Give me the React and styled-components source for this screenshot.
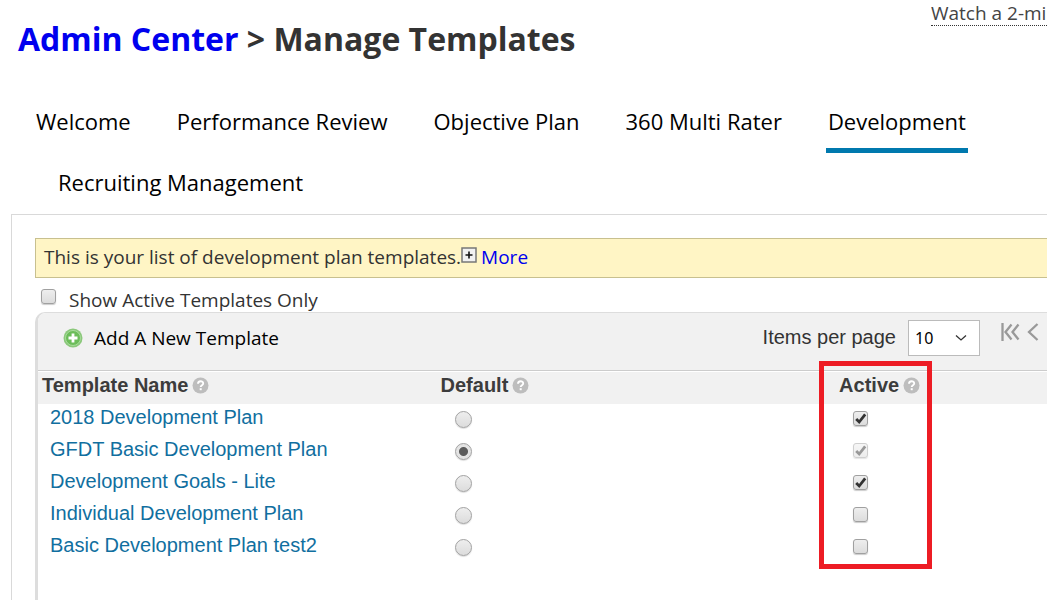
import React, { useState } from "react";
import styled, { createGlobalStyle } from "styled-components";

const GlobalStyle = createGlobalStyle`
  * {
    box-sizing: border-box;
  }
  body {
    margin: 0;
    background-color: white;
    color: #333;
    font-family: "Open Sans", "Noto Sans", sans-serif;
    font-size: 19px;
  }
`;

const Page = styled.div`
  min-height: 100vh;
  display: flex;
  flex-direction: column;
  overflow: hidden;
`;

const Header = styled.header`
  display: flex;
  justify-content: space-between;
  align-items: flex-start;
  padding-left: 18px;
  height: 90px;
`;

const Title = styled.h1`
  margin: 17px 0 0;
  font-size: 32px;
  line-height: 44px;
  white-space: nowrap;
`;

const TitleLink = styled.a`
  color: #0000ee;
  text-decoration: none;
`;

const VideoLink = styled.a`
  flex: 0 0 116px;
  margin-top: 2px;
  overflow: hidden;
  white-space: nowrap;
  color: #444;
  line-height: 23px;
  text-decoration: none;
  border-bottom: 1px dotted #333;
`;

const Tabs = styled.nav`
  padding: 15px 0 0 34px;
`;

const TabRow = styled.div`
  display: flex;
  gap: 42px;
  height: 48px;
  margin-bottom: 13px;
  padding-left: ${(props) => (props.$indent ? "22px" : "0")};
`;

const Tab = styled.button`
  padding: 0 2px 12px;
  border: none;
  border-bottom: 5px solid ${(props) => (props.$active ? "#0079ae" : "transparent")};
  background: none;
  color: black;
  font-family: inherit;
  font-size: 22px;
  line-height: 30px;
  white-space: nowrap;
  cursor: pointer;
`;

const Panel = styled.main`
  flex: 1;
  display: flex;
  flex-direction: column;
  margin: -13px 0 0 11px;
  padding: 23px 0 0 23px;
  border-top: 1px solid #d9d9d9;
  border-left: 1px solid #d9d9d9;
`;

const Notice = styled.div`
  display: flex;
  align-items: center;
  height: 40px;
  padding: 0 0 2px 8px;
  border: 1px solid #c8c08f;
  border-right: none;
  background-color: #fff5c5;
`;

const MoreButton = styled.button`
  display: flex;
  align-items: center;
  gap: 4px;
  padding: 0;
  border: none;
  background: none;
  color: #0000ee;
  font: inherit;
  cursor: pointer;

  svg {
    margin-bottom: 5px;
  }
`;

const FilterLabel = styled.label`
  display: flex;
  align-items: center;
  gap: 13px;
  height: 34px;
  padding: 10px 0 0 6px;
  line-height: 24px;
`;

const FilterBox = styled.span`
  display: flex;
  padding-bottom: 8px;
`;

const Grid = styled.section`
  flex: 1;
  border-top: 1px solid #ddd;
  border-left: 3px solid #ddd;
  border-top-left-radius: 10px;
`;

const Toolbar = styled.div`
  display: flex;
  align-items: center;
  justify-content: space-between;
  height: 58px;
  padding: 0 8px 8px 25px;
  border-bottom: 1px solid #ccc;
  border-top-left-radius: 8px;
  background-color: #f1f1f1;
`;

const AddButton = styled.button`
  display: flex;
  align-items: center;
  gap: 11px;
  padding: 0;
  border: none;
  background: none;
  color: black;
  font: inherit;
  cursor: pointer;
`;

const Paging = styled.div`
  display: flex;
  align-items: center;
  font-family: "Liberation Sans", Arial, sans-serif;
  font-size: 20px;
`;

const SelectBox = styled.div`
  display: grid;
  align-items: center;
  margin: 0 21px 0 12px;

  > * {
    grid-area: 1 / 1;
  }
  svg {
    justify-self: end;
    margin-right: 13px;
    pointer-events: none;
  }
`;

const Select = styled.select`
  appearance: none;
  width: 72px;
  height: 36px;
  padding: 0 6px;
  border: 1px solid #bbb;
  border-radius: 0;
  background-color: white;
  color: black;
  font-family: "Noto Sans", sans-serif;
  font-size: 16px;
`;

const PageButton = styled.button`
  display: flex;
  margin: 0 0 12px;
  padding: 0 0 0 ${(props) => (props.$spaced ? "7px" : "0")};
  border: none;
  background: none;
  cursor: pointer;
`;

const Table = styled.table`
  width: 100%;
  margin-top: 1px;
  table-layout: fixed;
  border-collapse: collapse;
  font-family: "Liberation Sans", Arial, sans-serif;
  font-size: 20px;
`;

const Th = styled.th`
  position: relative;
  width: ${(props) => props.$width || "auto"};
  height: 32px;
  padding: 0 4px 6px;
  background-color: #f1f1f1;
  color: #3c3c3c;
  line-height: 24px;
  text-align: left;
`;

const HeadCell = styled.div`
  display: flex;
  align-items: center;
  gap: 4px;
`;

// red frame drawn over the Active column
const Highlight = styled.div`
  position: absolute;
  top: -11px;
  left: -16px;
  width: 113px;
  height: 208px;
  border: 5px solid #ed1c24;
  pointer-events: none;
`;

const Td = styled.td`
  height: 32px;
  padding: ${(props) => props.$padding};
  line-height: 24px;
  vertical-align: top;
`;

const TemplateLink = styled.a`
  color: #116f9f;
  text-decoration: none;
`;

const Radio = styled.input`
  appearance: none;
  display: block;
  width: 17px;
  height: 17px;
  margin: 0;
  border: 1px solid #a3a3a3;
  border-radius: 50%;
  background: linear-gradient(#eee, #dcdcdc);
  box-shadow: 0 1px 1px #ddd;

  &:checked {
    background: radial-gradient(circle, #5c5c5c 4px, #e4e4e4 5px);
  }
`;

const CheckWrap = styled.span`
  display: inline-grid;
  vertical-align: top;
  opacity: ${(props) => (props.$disabled ? 0.5 : 1)};

  > * {
    grid-area: 1 / 1;
  }
  svg {
    pointer-events: none;
  }
`;

const CheckInput = styled.input`
  appearance: none;
  width: 15px;
  height: 15px;
  margin: 0;
  border: 1px solid #a0a0a0;
  border-radius: 3px;
  background: linear-gradient(#eee, #dcdcdc);
  box-shadow: 0 1px 1px #ccc;
`;

const Checkbox = ({ checked, disabled, onChange, ...rest }) => (
  <CheckWrap $disabled={disabled}>
    <CheckInput
      type="checkbox"
      checked={checked}
      disabled={disabled}
      onChange={onChange}
      {...rest}
    />
    {checked && (
      <svg width="15" height="15" viewBox="0 0 15 15">
        <path d="M3.2 8l3 3 6-7.6" fill="none" stroke="#333" strokeWidth="2.8" />
      </svg>
    )}
  </CheckWrap>
);

const HelpIcon = () => (
  <svg width="17" height="17" viewBox="0 0 17 17">
    <circle cx="8.5" cy="8.5" r="8" fill="#bdbdbd" />
    <path
      d="M6 6.8c0-3.4 5.2-3.2 5.2-.4 0 1.8-2.5 1.8-2.5 3.6"
      fill="none"
      stroke="#fff"
      strokeWidth="1.9"
    />
    <rect x="7.7" y="11.2" width="2" height="2" fill="#fff" />
  </svg>
);

const AddIcon = () => (
  <svg width="20" height="20" viewBox="0 0 20 20">
    <circle cx="10" cy="10" r="9.5" fill="#8bc87b" />
    <circle cx="10" cy="10" r="7.5" fill="#6cbd5a" stroke="#a9dc9c" strokeWidth="1" />
    <path d="M10 5.5v9M5.5 10h9" stroke="#fff" strokeWidth="2.8" />
  </svg>
);

const ExpandIcon = () => (
  <svg width="16" height="16" viewBox="0 0 16 16">
    <rect x="1" y="1" width="14" height="14" fill="#f1f1f1" stroke="#777" strokeWidth="1.5" />
    <path d="M8 4.5v7M4.5 8h7" stroke="#111" strokeWidth="1.6" />
  </svg>
);

const TEMPLATES = [
  { name: "2018 Development Plan", active: true },
  { name: "GFDT Basic Development Plan", active: true, locked: true },
  { name: "Development Goals - Lite", active: true },
  { name: "Individual Development Plan", active: false },
  { name: "Basic Development Plan test2", active: false },
];

const TABS = [
  ["Welcome", "Performance Review", "Objective Plan", "360 Multi Rater", "Development"],
  ["Recruiting Management"],
];

const App = () => {
  const [tab, setTab] = useState("Development");
  const [activeOnly, setActiveOnly] = useState(false);
  const [defaultName, setDefaultName] = useState(TEMPLATES[1].name);
  const [templates, setTemplates] = useState(TEMPLATES);

  const toggleActive = (name) =>
    setTemplates(
      templates.map((t) => (t.name === name ? { ...t, active: !t.active } : t))
    );

  return (
    <>
      <GlobalStyle />
      <Page>
        <Header>
          <Title>
            <TitleLink href="#admin">Admin Center</TitleLink> &gt; Manage Templates
          </Title>
          <VideoLink href="#video">Watch a 2-min</VideoLink>
        </Header>
        <Tabs>
          {TABS.map((row, i) => (
            <TabRow key={row[0]} $indent={i > 0}>
              {row.map((name) => (
                <Tab key={name} $active={name === tab} onClick={() => setTab(name)}>
                  {name}
                </Tab>
              ))}
            </TabRow>
          ))}
        </Tabs>
        <Panel>
          <Notice>
            This is your list of development plan templates.
            <MoreButton>
              <ExpandIcon />
              More
            </MoreButton>
          </Notice>
          <FilterLabel>
            <FilterBox>
              <Checkbox
                checked={activeOnly}
                onChange={(e) => setActiveOnly(e.target.checked)}
              />
            </FilterBox>
            Show Active Templates Only
          </FilterLabel>
          <Grid>
            <Toolbar>
              <AddButton>
                <AddIcon />
                Add A New Template
              </AddButton>
              <Paging>
                <label htmlFor="page-size">Items per page</label>
                <SelectBox>
                  <Select id="page-size" defaultValue="10">
                    <option>10</option>
                    <option>25</option>
                    <option>50</option>
                  </Select>
                  <svg width="12" height="8" viewBox="0 0 12 8">
                    <path d="M1 1.5l5 4.5 5-4.5" fill="none" stroke="#333" strokeWidth="1.3" />
                  </svg>
                </SelectBox>
                <PageButton aria-label="First page">
                  <svg width="19" height="18" viewBox="0 0 19 18">
                    <path
                      d="M1.5 0v18M10.5 1.5L4.5 9l6 7.5M17.5 1.5L11.5 9l6 7.5"
                      fill="none"
                      stroke="#999"
                      strokeWidth="2.3"
                    />
                  </svg>
                </PageButton>
                <PageButton aria-label="Previous page" $spaced>
                  <svg width="12" height="18" viewBox="0 0 12 18">
                    <path d="M10.5 1L2 9l8.5 8" fill="none" stroke="#999" strokeWidth="2.3" />
                  </svg>
                </PageButton>
              </Paging>
            </Toolbar>
            <Table>
              <thead>
                <tr>
                  <Th $width="39.5%">
                    <HeadCell>
                      Template Name <HelpIcon />
                    </HeadCell>
                  </Th>
                  <Th $width="39.5%">
                    <HeadCell>
                      Default <HelpIcon />
                    </HeadCell>
                  </Th>
                  <Th>
                    <HeadCell>
                      Active <HelpIcon />
                    </HeadCell>
                    <Highlight />
                  </Th>
                </tr>
              </thead>
              <tbody>
                {templates
                  .filter((t) => !activeOnly || t.active)
                  .map((t) => (
                    <tr key={t.name}>
                      <Td $padding="1px 0 0 12px">
                        <TemplateLink href="#template">{t.name}</TemplateLink>
                      </Td>
                      <Td $padding="7px 0 0 18px">
                        <Radio
                          type="radio"
                          name="default-template"
                          aria-label={`Default: ${t.name}`}
                          checked={t.name === defaultName}
                          onChange={() => setDefaultName(t.name)}
                        />
                      </Td>
                      <Td $padding="7px 0 0 18px">
                        <Checkbox
                          aria-label={`Active: ${t.name}`}
                          checked={t.active}
                          disabled={t.locked}
                          onChange={() => toggleActive(t.name)}
                        />
                      </Td>
                    </tr>
                  ))}
              </tbody>
            </Table>
          </Grid>
        </Panel>
      </Page>
    </>
  );
};

export default App;
